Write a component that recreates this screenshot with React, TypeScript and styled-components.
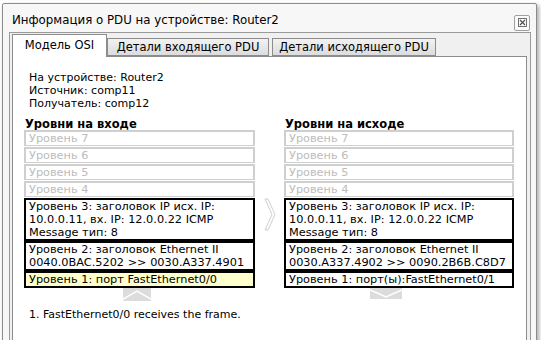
import styled, { createGlobalStyle } from "styled-components";

const GlobalStyle = createGlobalStyle`
  html, body {
    margin: 0;
    padding: 0;
    background: #ffffff;
    overflow: hidden;
  }
`;

const Window = styled.div`
  margin: 3px 0 0 2px;
  width: 535px;
  height: 360px;
  background: #f7f7f7;
  border: 1px solid #8c8c8c;
  border-radius: 2px;
  box-shadow: 2px 2px 4px rgba(0, 0, 0, 0.35);
  box-sizing: border-box;
  font-family: "DejaVu Sans", Verdana, sans-serif;
  font-size: 11px;
  color: #000;
`;

const TitleBar = styled.div`
  height: 28px;
  display: flex;
  align-items: center;
  justify-content: space-between;
  padding: 0 6px 0 9px;
`;

const Title = styled.span`
  font-size: 11.8px;
  padding-top: 4px;
`;

const CloseButton = styled.div`
  width: 16px;
  height: 16px;
  margin-top: 9px;
  border: 1px solid #a0a0a0;
  border-radius: 2px;
  background: #fbfbfb;
  display: flex;
  align-items: center;
  justify-content: center;
  box-sizing: border-box;
`;

const TabBox = styled.div`
  margin: 0 5px 0 6px;
  border: 1px solid #9a9a9a;
  background: #f0f0f0;
  padding: 1px 3px 0 2px;
  height: 330px;
  box-sizing: border-box;
`;

const TabRow = styled.div`
  display: flex;
  align-items: flex-end;
  height: 22px;
`;

const Tab = styled.div<{ $active?: boolean; $w: number }>`
  width: ${(p) => p.$w}px;
  height: ${(p) => (p.$active ? "23px" : "18px")};
  margin-right: ${(p) => (p.$active ? "0" : "3px")};
  margin-bottom: ${(p) => (p.$active ? "-1px" : "0")};
  border: 1px solid #8c8c8c;
  border-bottom: ${(p) => (p.$active ? "none" : "1px solid #8c8c8c")};
  background: ${(p) => (p.$active ? "#ffffff" : "linear-gradient(#f2f2f2, #dcdcdc)")};
  display: flex;
  align-items: center;
  justify-content: center;
  padding-bottom: ${(p) => (p.$active ? "3px" : "0")};
  font-size: 11.5px;
  box-sizing: border-box;
  position: relative;
  z-index: ${(p) => (p.$active ? 1 : 0)};
`;

const Panel = styled.div`
  border: 1px solid #8c8c8c;
  background: #ffffff;
  height: 300px;
  padding: 14px 12px 0 11px;
  box-sizing: border-box;
`;

const Info = styled.div`
  padding-left: 5px;
  line-height: 13px;
  margin-bottom: 8px;
`;

const Columns = styled.div`
  display: flex;
  align-items: flex-start;
`;

const Column = styled.div<{ $w: number }>`
  width: ${(p) => p.$w}px;
  display: flex;
  flex-direction: column;
`;

const Heading = styled.div`
  font-weight: bold;
  font-size: 11.5px;
  line-height: 12px;
  padding-left: 1px;
`;

const Layer = styled.div<{ $state: "off" | "on" | "cur" }>`
  border: 2px solid ${(p) => (p.$state === "off" ? "#cfcfcf" : "#000")};
  border-bottom-width: ${(p) => (p.$state === "off" ? "1px" : "2px")};
  margin-bottom: ${(p) => (p.$state === "off" ? "1px" : "0")};
  color: ${(p) => (p.$state === "off" ? "#bcbcbc" : "#000")};
  background: ${(p) => (p.$state === "cur" ? "#ffffcc" : "#fff")};
  padding: 0 3px;
  font-size: 11.3px;
  line-height: 13px;
  white-space: pre;
  overflow: hidden;
`;

const Middle = styled.div`
  width: 29px;
  display: flex;
  justify-content: center;
  padding-top: 80px;
`;

const Chevron = styled.div<{ $left: number }>`
  padding-left: ${(p) => p.$left}px;
  height: 13px;
  display: flex;
  align-items: flex-start;
  flex-shrink: 0;
`;

const Note = styled.div`
  padding: 7px 0 0 5px;
  line-height: 13px;
`;

const inLayers = [
  "Уровень 3: заголовок IP исх. IP:\n10.0.0.11, вх. IP: 12.0.0.22 ICMP\nMessage тип: 8",
  "Уровень 2: заголовок Ethernet II\n0040.0BAC.5202 >> 0030.A337.4901",
];
const outLayers = [
  "Уровень 3: заголовок IP исх. IP:\n10.0.0.11, вх. IP: 12.0.0.22 ICMP\nMessage тип: 8",
  "Уровень 2: заголовок Ethernet II\n0030.A337.4902 >> 0090.2B6B.C8D7",
];

function GrayLayers() {
  return (
    <>
      {[7, 6, 5, 4].map((n) => (
        <Layer key={n} $state="off">
          Уровень {n}
        </Layer>
      ))}
    </>
  );
}

export default function App() {
  return (
    <>
      <GlobalStyle />
      <Window>
        <TitleBar>
          <Title>Информация о PDU на устройстве: Router2</Title>
          <CloseButton>
            <svg width="9" height="9" viewBox="0 0 9 9">
              <rect x="0.5" y="0.5" width="8" height="8" fill="none" stroke="#707070" />
              <path d="M2 2 L7 7 M7 2 L2 7" stroke="#505050" strokeWidth="1.2" />
            </svg>
          </CloseButton>
        </TitleBar>
        <TabBox>
          <TabRow>
            <Tab $active $w={95}>
              Модель OSI
            </Tab>
            <Tab $w={162}>Детали входящего PDU</Tab>
            <Tab $w={164}>Детали исходящего PDU</Tab>
          </TabRow>
          <Panel>
            <Info>
              На устройстве: Router2
              <br />
              Источник: comp11
              <br />
              Получатель: comp12
            </Info>
            <Columns>
              <Column $w={231}>
                <Heading>Уровни на входе</Heading>
                <GrayLayers />
                {inLayers.map((t) => (
                  <Layer key={t} $state="on">
                    {t}
                  </Layer>
                ))}
                <Layer $state="cur">Уровень 1: порт FastEthernet0/0</Layer>
                <Chevron $left={99}>
                  <svg width="28" height="13" viewBox="0 0 28 13">
                    <rect x="0" y="0" width="28" height="13" fill="#dcdcdc" />
                    <polyline points="0,11 14,3 28,11" fill="none" stroke="#ffffff" strokeWidth="1.5" />
                  </svg>
                </Chevron>
              </Column>
              <Middle>
                <svg width="12" height="33" viewBox="0 0 12 33">
                  <polygon
                    points="1,1 4,1 11,16.5 4,32 1,32 8,16.5"
                    fill="#fff"
                    stroke="#cfcfcf"
                    strokeWidth="1"
                  />
                </svg>
              </Middle>
              <Column $w={230}>
                <Heading>Уровни на исходе</Heading>
                <GrayLayers />
                {outLayers.map((t) => (
                  <Layer key={t} $state="on">
                    {t}
                  </Layer>
                ))}
                <Layer $state="on">Уровень 1: порт(ы):FastEthernet0/1</Layer>
                <Chevron $left={86}>
                  <svg width="32" height="11" viewBox="0 0 32 11">
                    <rect x="0" y="0" width="32" height="11" fill="#dcdcdc" />
                    <polyline points="0,2 16,9 32,2" fill="none" stroke="#ffffff" strokeWidth="1.5" />
                  </svg>
                </Chevron>
              </Column>
            </Columns>
            <Note>1. FastEthernet0/0 receives the frame.</Note>
          </Panel>
        </TabBox>
      </Window>
    </>
  );
}
